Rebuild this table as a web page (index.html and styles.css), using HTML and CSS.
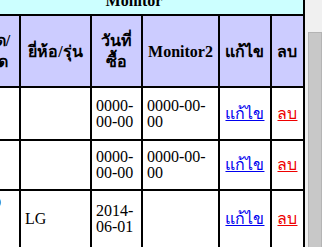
FILE: index.html
```html
<!DOCTYPE html>
<html lang="th">
<head>
<meta charset="utf-8">
<title>Monitor</title>
<link rel="stylesheet" href="styles.css">
</head>
<body>
<div class="page">
  <div class="view">
    <table class="grid">
      <colgroup>
        <col class="c-type">
        <col class="c-brand">
        <col class="c-date">
        <col class="c-mon2">
        <col class="c-edit">
        <col class="c-del">
      </colgroup>
      <tr class="r-title"><th class="title" colspan="6">Monitor</th></tr>
      <tr class="r-head">
        <th>ชนิด/ ชนิด</th>
        <th>ยี่ห้อ/รุ่น</th>
        <th>วันที่ ซื้อ</th>
        <th>Monitor2</th>
        <th>แก้ไข</th>
        <th>ลบ</th>
      </tr>
      <tr class="r1">
        <td></td>
        <td></td>
        <td>0000-00-00</td>
        <td>0000-00-00</td>
        <td class="act"><a class="edit" href="#">แก้ไข</a></td>
        <td class="act"><a class="del" href="#">ลบ</a></td>
      </tr>
      <tr class="r2">
        <td></td>
        <td></td>
        <td>0000-00-00</td>
        <td>0000-00-00</td>
        <td class="act"><a class="edit" href="#">แก้ไข</a></td>
        <td class="act"><a class="del" href="#">ลบ</a></td>
      </tr>
      <tr class="r3">
        <td>LCD<br>19<br>นิ้ว</td>
        <td>LG</td>
        <td>2014-06-01</td>
        <td></td>
        <td class="act"><a class="edit" href="#">แก้ไข</a></td>
        <td class="act"><a class="del" href="#">ลบ</a></td>
      </tr>
      <tr class="r4">
        <td>LCD<br>17<br>นิ้ว</td>
        <td>Samsung</td>
        <td>2013-01-01</td>
        <td></td>
        <td class="act"><a class="edit" href="#">แก้ไข</a></td>
        <td class="act"><a class="del" href="#">ลบ</a></td>
      </tr>
    </table>
  </div>
  <div class="scrollbar"><div class="thumb"></div></div>
</div>
</body>
</html>
```

FILE: styles.css
```css
html, body {
  margin: 0;
  padding: 0;
  background: #ffffff;
}

body {
  font-family: "Liberation Serif", "Times New Roman", serif;
  font-size: 16px;
  color: #000;
  overflow: hidden;
}

.page {
  display: flex;
  height: 247px;
  overflow: hidden;
}

.view {
  width: 305px;
  flex: none;
  display: flex;
  justify-content: flex-end;
  overflow: hidden;
}

.grid {
  flex: none;
  margin-top: -14px;
  width: 340px;
  table-layout: fixed;
  border-collapse: separate;
  border-spacing: 0;
  border-top: 2px solid #000;
  border-left: 2px solid #000;
}

.c-type { width: 56px; }
.c-brand { width: 71px; }
.c-date { width: 51px; }
.c-mon2 { width: 77px; }
.c-edit { width: 52px; }
.c-del { width: 33px; }

.grid th,
.grid td {
  box-sizing: border-box;
  border-right: 2px solid #000;
  border-bottom: 2px solid #000;
  padding: 4px;
  vertical-align: middle;
  overflow: hidden;
}

.grid th {
  font-weight: bold;
  background: #ccccff;
  text-align: center;
  line-height: 21px;
}

.grid th.title {
  background: #ccffff;
  line-height: 18px;
}

.grid td {
  text-align: left;
  background: #ffffff;
  line-height: 16px;
}

.r-title th { height: 28px; }
.r-head th { height: 72px; }
.r1 td { height: 53px; }
.r2 td { height: 50px; }
.r3 td { height: 52px; }
.r4 td { height: 52px; }

.grid td.act {
  text-align: center;
}

.edit {
  color: #0000ee;
}

.del {
  color: #ee0000;
}

.scrollbar {
  width: 17px;
  flex: none;
  background: #f0f0f0;
}

.thumb {
  margin: 32px 0 0 3px;
  height: 400px;
  background: #c8c8c8;
  border: 1px solid #b4b4b4;
}
```
